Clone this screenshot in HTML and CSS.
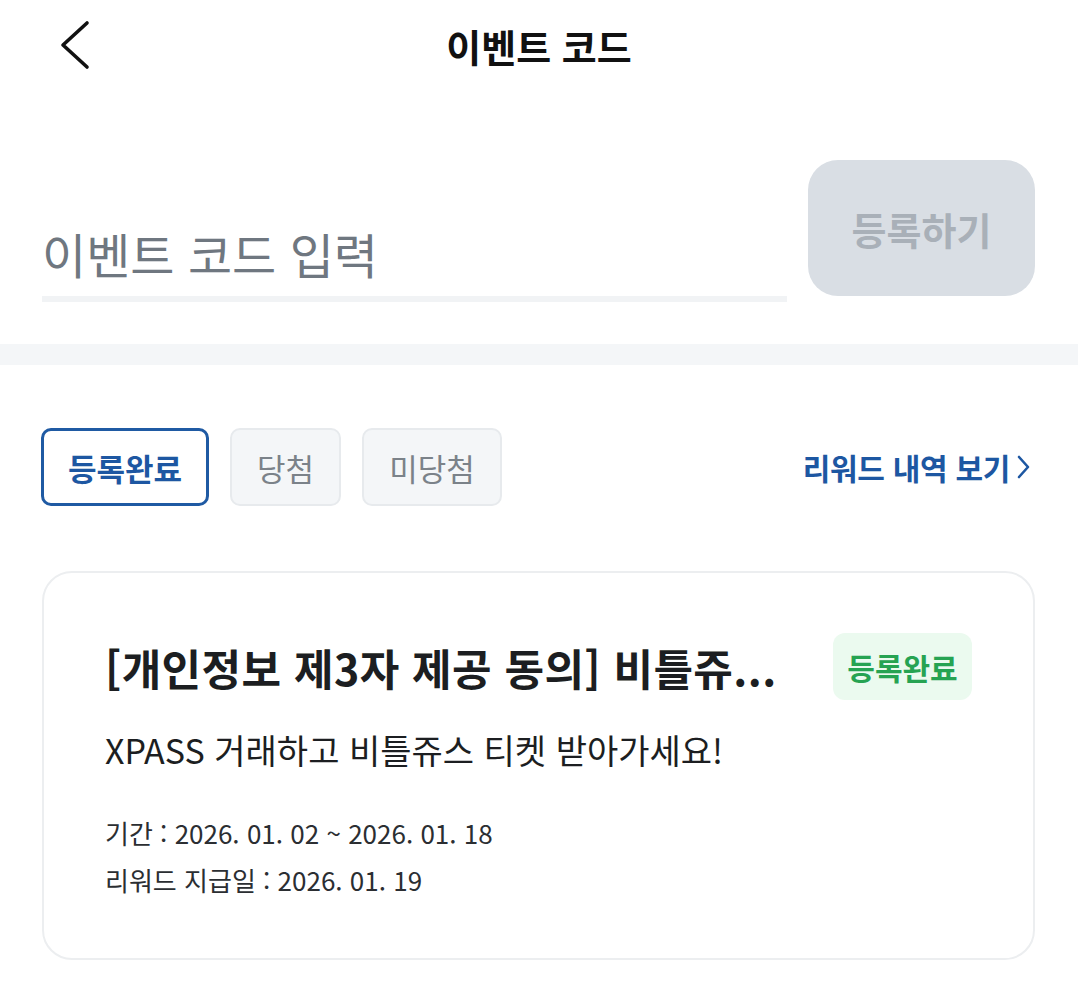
FILE: index.html
```html
<!DOCTYPE html>
<html lang="ko">
<head>
  <meta charset="UTF-8">
  <meta name="viewport" content="width=device-width, initial-scale=1.0">
  <title>이벤트 코드</title>
  <link rel="stylesheet" href="styles.css">
</head>
<body>
  <header class="topbar">
    <button class="back" aria-label="뒤로">
      <svg width="34" height="50" viewBox="0 0 34 50">
        <polyline points="29,3 5,25 29,47" fill="none" stroke="#111" stroke-width="3.6" stroke-linecap="round" stroke-linejoin="round"/>
      </svg>
    </button>
    <h1>이벤트 코드</h1>
  </header>

  <!-- code input -->
  <section class="code-form">
    <div class="code-field">
      <span class="placeholder">이벤트 코드 입력</span>
    </div>
    <button class="submit" disabled>등록하기</button>
  </section>

  <div class="divider"></div>

  <!-- filters -->
  <section class="filters">
    <div class="tabs">
      <button class="tab active">등록완료</button>
      <button class="tab">당첨</button>
      <button class="tab">미당첨</button>
    </div>
    <a class="history" href="#">리워드 내역 보기
      <svg width="14" height="26" viewBox="0 0 14 26">
        <polyline points="3,3 12,13 3,23" fill="none" stroke="#1d57a2" stroke-width="2.6" stroke-linecap="round" stroke-linejoin="round"/>
      </svg>
    </a>
  </section>

  <!-- event card -->
  <article class="card">
    <div class="card-head">
      <h2 class="card-title">[개인정보 제3자 제공 동의] 비틀쥬...</h2>
      <span class="badge">등록완료</span>
    </div>
    <p class="card-desc">XPASS 거래하고 비틀쥬스 티켓 받아가세요!</p>
    <div class="card-meta">
      <p>기간 : 2026. 01. 02 ~ 2026. 01. 18</p>
      <p>리워드 지급일 : 2026. 01. 19</p>
    </div>
  </article>
</body>
</html>
```

FILE: styles.css
```css
body { margin: 0; background: #fff; font-family: "Noto Sans CJK KR", "Noto Sans", sans-serif; color: #111; }
button { font-family: inherit; }
p { margin: 0; }

.topbar { position: relative; height: 90px; display: flex; align-items: center; justify-content: center; }
.topbar h1 { margin: 0; font-size: 38px; font-weight: 700; color: #111; }
.back { position: absolute; left: 58px; top: 20px; padding: 0; border: 0; background: none; }

.code-form { display: flex; gap: 21px; padding: 70px 43px 42px 42px; }
.code-field { flex: 1; height: 136px; display: flex; align-items: flex-end; border-bottom: 6px solid #f1f3f5; }
.placeholder { font-size: 48px; line-height: 60px; padding-bottom: 13px; color: #6f7780; }
.submit { width: 227px; height: 136px; border: 0; border-radius: 30px; background: #d9dee4; color: #a9b0b8; font-size: 38px; font-weight: 700; }

.divider { height: 21px; background: #f4f6f8; }

.filters { display: flex; align-items: center; justify-content: space-between; padding: 63px 48px 65px 41px; }
.tabs { display: flex; gap: 21px; }
.tab { height: 78px; padding: 0 25px; border: 2px solid #e7eaed; border-radius: 10px; background: #f4f6f8; color: #7b8289; font-size: 31px; }
.tab.active { padding: 0 24px; border: 3px solid #1f5aa3; background: #fff; color: #1d57a2; font-weight: 700; }
.history { display: flex; align-items: center; gap: 6px; color: #1d57a2; font-size: 30px; font-weight: 700; text-decoration: none; letter-spacing: -0.3px; }

.card { margin: 0 43px 0 42px; padding: 60px 61px 55px 61px; border: 2px solid #eceef0; border-radius: 30px; }
.card-head { display: flex; align-items: center; gap: 50px; }
.card-title { flex: 1; min-width: 0; margin: 0; font-size: 43px; font-weight: 700; letter-spacing: 0.4px; color: #1c1e21; white-space: nowrap; }
.badge { flex: none; width: 139px; height: 67px; display: flex; align-items: center; justify-content: center; border-radius: 12px; background: #ebfaef; color: #26a352; font-size: 30px; font-weight: 700; }
.card-desc { margin-top: 28px; font-size: 34px; line-height: 43px; color: #1c1e21; }
.card-meta { margin-top: 38px; font-size: 26px; line-height: 47px; color: #2b2e32; }
```
